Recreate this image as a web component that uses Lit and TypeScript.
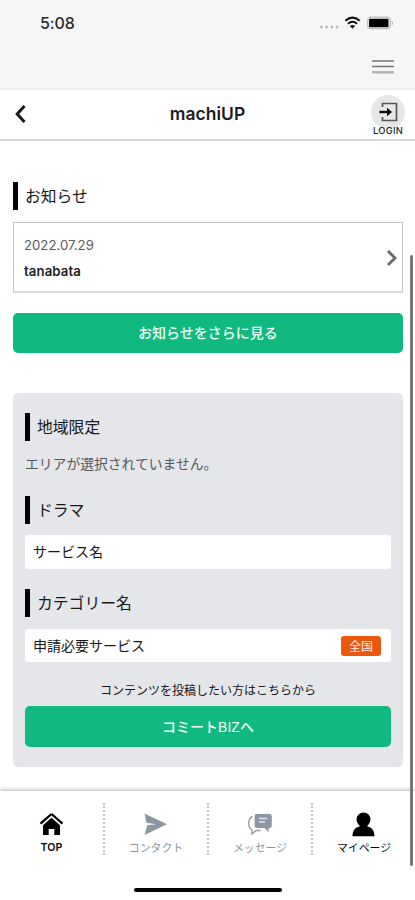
import { LitElement, html, css, svg } from "lit";
import { customElement, property } from "lit/decorators.js";

@customElement("section-title")
class SectionTitle extends LitElement {
  @property() label = "";
  static styles = css`
    :host { display: flex; align-items: center; height: 28px; gap: 7px; font-size: 15.8px; font-weight: 400; color: #17181a; }
    .bar { width: 5px; height: 28px; background: #030406; flex: none; }
    .label { line-height: 28px; white-space: nowrap; padding-top: 2px; }
  `;
  render() {
    return html`<span class="bar"></span><span class="label">${this.label}</span>`;
  }
}

const icons = {
  home: svg`<path d="M12.500 2 1.500 11.600M12.500 2l11 9.600" fill="none" stroke="#000" stroke-width="2.300"/><path d="M12.500 5.800 4 13.200V23h5.700v-6h5.600v6H21v-9.800z"/>`,
  send: svg`<path d="M1.500 1.500 24 12.200 1.500 23 4.200 13.200l8.600-1L3.400 10.800z"/>`,
  chat: svg`<path d="M9.800 2h12.800A2.200 2.200 0 0 1 24.800 4.200v9.600a2.200 2.200 0 0 1-2.200 2.200h-1v4.200L17.500 16H9.800a2.200 2.200 0 0 1-2.200-2.200V4.200A2.200 2.200 0 0 1 9.800 2z"/><path d="M12 6.500h8.500M12 10h6" stroke="#e1e4ea" stroke-width="1.400"/><path d="M5.600 4.500C3 5.600 1.700 8 1.700 11c0 3 1.100 5.400 3.300 7v4l4.200-3.500h4.500" fill="none" stroke="#9299a8" stroke-width="1.400"/>`,
  user: svg`<circle cx="12.500" cy="7.500" r="7"/><path d="M1.500 24.200c0-6 3-9 7-9.800v-3h8v3c4 .8 7 3.800 7 9.800z"/>`,
};

@customElement("app-root")
class AppRoot extends LitElement {
  static styles = css`
    :host { display: block; width: 415px; height: 900px; overflow: hidden; position: relative; background: #fff;
      font-family: "Liberation Sans", "Noto Sans CJK JP", sans-serif; color: #15171a; }
    * { box-sizing: border-box; }
    svg { display: block; }
    .top { height: 90px; background: #f6f6f6; border-bottom: 2px solid #ececec; }
    .status { height: 46px; padding: 0 20px 0 40px; display: flex; align-items: center; justify-content: space-between; }
    .time { font: 500 16px/20px Inter, sans-serif; color: #29292b; letter-spacing: -.1px; }
    .menu { display: flex; justify-content: flex-end; padding: 13px 21px 0 0; }
    .header { height: 51px; border-bottom: 2px solid #d6d6d6; display: grid; grid-template-columns: 80px 1fr 80px; align-items: center; }
    .back { padding-left: 14px; padding-bottom: 1px; }
    .title { text-align: center; font: 600 17.400px/24px Inter, sans-serif; color: #1b1c1f; letter-spacing: .1px; padding-bottom: 2px; }
    .login { justify-self: end; width: 34px; margin-right: 10px; height: 44px; margin-top: 5px; display: flex; flex-direction: column; align-items: center; }
    .round { width: 34px; height: 34px; border-radius: 50%; background: #e5e7e9; padding: 6px 0 0 7px; flex: none; }
    .login-text { font: 500 9.300px/10px Inter, sans-serif; color: #222; margin-top: -3px; letter-spacing: .3px; }
    .main { padding: 41px 12px 0 13px; }
    .notice { margin-top: 12px; height: 71px; border: 1px solid #c4c4c4; border-bottom: 2px solid #dadada; display: flex; align-items: center; justify-content: space-between; padding: 2px 4px 0 10px; }
    .date { font: 400 13.200px/26px Inter, sans-serif; color: #59595b; }
    .name { font: 600 13.200px/26px Inter, sans-serif; color: #1d1d1f; letter-spacing: .1px; }
    .button { height: 40px; border-radius: 5px; background: #11b981; color: #edfff8; display: flex; align-items: center; justify-content: center; font-size: 14px; font-weight: 500; }
    .more { margin-top: 20px; padding-bottom: 2px; }
    .panel { margin-top: 40px; height: 374px; background: #e4e6ea; border-radius: 5px; padding: 20px 12px 0; }
    .empty { margin: 13px 0 21px; font-size: 13.800px; line-height: 21px; color: #55585e; }
    .field { height: 34px; margin: 11px 0 20px; background: #fff; border-radius: 3px; padding: 0 10px 2px 8px; display: flex; align-items: center; justify-content: space-between; font-size: 14px; font-weight: 400; }
    .field.last { margin-top: 12px; height: 33px; padding-bottom: 1px; }
    .badge { width: 40px; height: 20px; border-radius: 3px; background: #ea580c; color: #fff0e8; font-size: 12px; line-height: 18px; padding-top: 2px; margin-top: 2px; text-align: center; }
    .hint { text-align: center; font-size: 12px; line-height: 18px; margin-top: -2px; margin-bottom: 6px; padding: 2px 0 0 0; }
    .biz { height: 41px; font-family: "Liberation Sans", "Noto Sans CJK JP", sans-serif; padding-bottom: 2px; }
    .nav { height: 110px; margin-top: 24px; box-shadow: 0 -1px 4px rgba(0,0,0,.3); padding-top: 12px; display: grid; grid-template-columns: 103px repeat(3, 104px); grid-template-rows: 52px; position: relative; background: #fff; }
    .item { display: flex; flex-direction: column; align-items: center; padding-top: 9px; font-size: 10.900px; font-weight: 400; line-height: 14px; color: #8f949d; }
    .item + .item { border-left: 2px dotted #c4c4c4; }
    .item svg { fill: #8e96a5; }
    .item.strong { color: #08090a; }
    .item.strong svg { fill: #000; }
    .item.latin { font-family: Inter, sans-serif; font-weight: 600; font-size: 10.700px; }
    .caption { margin-top: 4px; white-space: nowrap; }
    .indicator { position: absolute; left: 134px; top: 888px; width: 148px; height: 4px; border-radius: 2px; background: #000; }
    .scroll { position: absolute; left: 409.500px; top: 255px; width: 3px; height: 611px; border-radius: 2px; background: #777; }
  `;

  private item(icon: keyof typeof icons, text: string, kind = "") {
    return html`<div class="item ${kind}">
      <svg width="26" height="25" viewBox="0 0 26 25">${icons[icon]}</svg>
      <span class="caption">${text}</span>
    </div>`;
  }

  render() {
    return html`
      <div class="top">
        <div class="status">
          <span class="time">5:08</span>
          <svg width="76" height="16" viewBox="0 0 76 16">
            <g fill="#bababa"><circle cx="2.500" cy="12" r="1.500"/><circle cx="7.700" cy="12" r="1.500"/><circle cx="12.800" cy="12" r="1.500"/><circle cx="18" cy="12" r="1.500"/></g>
            <g fill="none" stroke="#151515" stroke-width="2"><path d="M26.300 5.800q7.200-6.400 14.400 0"/><path d="M28.900 8.800q4.600-4 9.200 0"/></g>
            <path d="M30.900 11q2.600-2.100 5.200 0l-2.600 2.800z" fill="#151515"/>
            <rect x="48.700" y="2.200" width="22.600" height="11.500" rx="3" fill="none" stroke="#bbb" stroke-width="1.200"/>
            <rect x="50" y="3.700" width="19.500" height="8.500" rx="1"/>
            <path d="M72.800 6v4.500q2.600-2.200 0-4.500" fill="#aaa"/>
          </svg>
        </div>
        <div class="menu">
          <svg width="22" height="16" viewBox="0 0 22 16"><path d="M0 2h22" stroke="#8b8b8b" stroke-width="1.800"/><path d="M0 7.500h22" stroke="#777" stroke-width="1.500"/><path d="M0 13.300h22" stroke="#b2b2b2" stroke-width="2.400"/></svg>
        </div>
      </div>
      <div class="header">
        <div class="back"><svg width="14" height="20" viewBox="0 0 14 20"><path d="M10.500 2 3.200 10l7.300 8" fill="none" stroke="#17181a" stroke-width="3"/></svg></div>
        <div class="title">machiUP</div>
        <div class="login">
          <div class="round"><svg width="22" height="22" viewBox="0 0 22 22"><path d="M4.500 6V2.500h14v17h-14V16" fill="none" stroke="#56585a" stroke-width="1.700"/><path d="M1.500 11h10" stroke="#090909" stroke-width="2.400"/><path d="M9 6.700 14 11l-5 4.300z" fill="#090909"/></svg></div>
          <div class="login-text">LOGIN</div>
        </div>
      </div>
      <div class="main">
        <section-title label="お知らせ"></section-title>
        <div class="notice">
          <div><div class="date">2022.07.29</div><div class="name">tanabata</div></div>
          <svg width="12" height="18" viewBox="0 0 12 18"><path d="m2 2 7 7-7 7" fill="none" stroke="#68686a" stroke-width="2.800"/></svg>
        </div>
        <div class="button more">お知らせをさらに見る</div>
        <div class="panel">
          <section-title label="地域限定"></section-title>
          <div class="empty">エリアが選択されていません。</div>
          <section-title label="ドラマ"></section-title>
          <div class="field">サービス名</div>
          <section-title label="カテゴリー名"></section-title>
          <div class="field last">申請必要サービス<span class="badge">全国</span></div>
          <div class="hint">コンテンツを投稿したい方はこちらから</div>
          <div class="button biz">コミートBIZへ</div>
        </div>
      </div>
      <div class="nav">
        ${this.item("home", "TOP", "strong latin")}
        ${this.item("send", "コンタクト")}
        ${this.item("chat", "メッセージ")}
        ${this.item("user", "マイページ", "strong")}
      </div>
      <div class="indicator"></div>
      <div class="scroll"></div>
    `;
  }
}
